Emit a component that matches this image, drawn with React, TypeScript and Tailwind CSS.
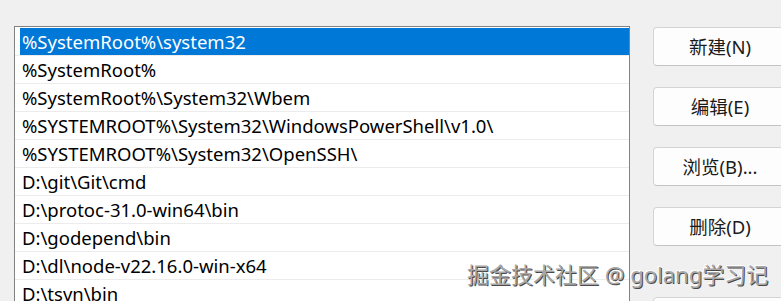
const paths = [
	'%SystemRoot%\\system32',
	'%SystemRoot%',
	'%SystemRoot%\\System32\\Wbem',
	'%SYSTEMROOT%\\System32\\WindowsPowerShell\\v1.0\\',
	'%SYSTEMROOT%\\System32\\OpenSSH\\',
	'D:\\git\\Git\\cmd',
	'D:\\protoc-31.0-win64\\bin',
	'D:\\godepend\\bin',
	'D:\\dl\\node-v22.16.0-win-x64',
	'D:\\tsvn\\bin',
];

const buttons = ['新建(N)', '编辑(E)', '浏览(B)...', '删除(D)'];

export default function App() {
	return (
		<div
			className="relative w-[781px] h-[301px] overflow-hidden bg-[#f0f0f0] flex items-start pl-[14px] pt-[26px]"
			style={{ fontFamily: '"Noto Sans", "Noto Sans CJK SC", sans-serif' }}
		>
			{/* パス一覧 */}
			<div className="w-[616px] h-[300px] shrink-0 border border-[#828282] bg-white pt-px">
				{paths.map((p, i) => (
					<div key={p} className="h-[28px] border-b border-[#ececec]">
						<div
							className={
								i === 0
									? 'ml-[5px] h-full bg-[#0078d7] text-white pl-[2px] pt-px flex items-center text-[18.5px] leading-none'
									: 'ml-[5px] h-full text-black pl-[2px] pt-px flex items-center text-[18.5px] leading-none'
							}
						>
							{p}
						</div>
					</div>
				))}
			</div>

			{/* 操作ボタン */}
			<div className="ml-[23px] mt-px flex flex-col gap-[21px] shrink-0">
				{buttons.map((b) => (
					<div
						key={b}
						className="w-[134px] h-[39px] shrink-0 rounded-[4px] border border-[#d4d4d4] border-b-[#c4c4c4] bg-[#fdfdfd] flex items-center justify-center text-[18.5px] text-[#1a1a1a]"
					>
						{b}
					</div>
				))}
				<div className="w-[134px] h-[39px] shrink-0 mt-[30px] rounded-[4px] border border-[#d4d4d4] bg-[#fdfdfd]" />
			</div>

			{/* 透かし */}
			<div
				className="absolute left-[467px] top-[258px] text-[22px] text-[#a8a8a8] whitespace-nowrap"
				style={{ textShadow: '1px 1px 0 #4a4a4a, -1px -1px 0 #ffffff' }}
			>
				掘金技术社区 @ golang学习记
			</div>
		</div>
	);
}
